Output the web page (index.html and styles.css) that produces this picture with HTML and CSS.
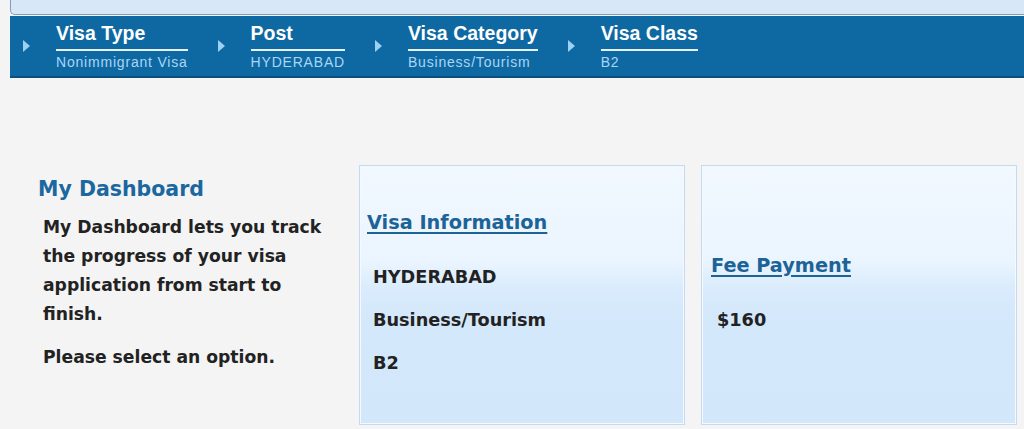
FILE: index.html
```html
<!DOCTYPE html>
<html>
<head>
<meta charset="utf-8">
<link rel="stylesheet" href="styles.css">
</head>
<body>
<div class="top-panel"></div>
<nav class="crumbs">
  <div class="step">
    <span class="arrow"></span>
    <div class="step-text">
      <div class="step-title">Visa Type</div>
      <div class="step-value">Nonimmigrant Visa</div>
    </div>
  </div>
  <div class="step">
    <span class="arrow"></span>
    <div class="step-text">
      <div class="step-title">Post</div>
      <div class="step-value">HYDERABAD</div>
    </div>
  </div>
  <div class="step">
    <span class="arrow"></span>
    <div class="step-text">
      <div class="step-title">Visa Category</div>
      <div class="step-value">Business/Tourism</div>
    </div>
  </div>
  <div class="step">
    <span class="arrow"></span>
    <div class="step-text">
      <div class="step-title">Visa Class</div>
      <div class="step-value">B2</div>
    </div>
  </div>
</nav>
<main class="main">
  <section class="intro">
    <h1 class="intro-title">My Dashboard</h1>
    <p class="intro-text">My Dashboard lets you track the progress of your visa application from start to finish.</p>
    <p class="intro-text">Please select an option.</p>
  </section>
  <section class="card card-info">
    <a class="card-link" href="#">Visa Information</a>
    <div class="card-item">HYDERABAD</div>
    <div class="card-item">Business/Tourism</div>
    <div class="card-item">B2</div>
  </section>
  <section class="card card-fee">
    <a class="card-link" href="#">Fee Payment</a>
    <div class="card-item">$160</div>
  </section>
</main>
</body>
</html>
```
FILE: styles.css
```css
html, body {
  margin: 0;
  padding: 0;
}
body {
  background: #f4f4f4;
  font-family: "DejaVu Sans", Verdana, sans-serif;
  width: 1024px;
  height: 429px;
  overflow: hidden;
}
.top-panel {
  margin-left: 10px;
  height: 14px;
  background: #d8e7f6;
  border-left: 1px solid #7d9dbf;
  border-bottom: 1px solid #7d9dbf;
  border-bottom-left-radius: 5px;
}
.crumbs {
  margin-left: 10px;
  margin-top: 1px;
  height: 60px;
  background: #0e69a3;
  border-bottom: 2px solid #0b4f7e;
  display: flex;
  align-items: flex-start;
  font-family: "Liberation Sans", Arial, sans-serif;
}
.step {
  display: flex;
  align-items: flex-start;
  margin-left: 30px;
}
.step:first-child {
  margin-left: 13px;
}
.arrow {
  width: 0;
  height: 0;
  margin-top: 24px;
  border-top: 6px solid transparent;
  border-bottom: 6px solid transparent;
  border-left: 7px solid #9dd0f2;
}
.step-text {
  margin-left: 26px;
  padding-top: 6px;
}
.step-title {
  color: #ffffff;
  font-weight: bold;
  font-size: 19.5px;
  line-height: 22px;
  padding-bottom: 5px;
  border-bottom: 2px solid #e6f1fa;
}
.step-value {
  color: #a9d6f5;
  font-size: 14px;
  letter-spacing: 0.8px;
  line-height: 18px;
  padding-top: 2px;
}
.main {
  display: flex;
  align-items: flex-start;
  margin-top: 87px;
  padding-left: 38px;
}
.intro {
  width: 321px;
  padding-top: 13px;
}
.intro-title {
  margin: 0;
  color: #1b679f;
  font-size: 20.5px;
  font-weight: bold;
  line-height: 22px;
}
.intro-text {
  width: 290px;
  margin: 13px 0 0 5px;
  color: #222222;
  font-size: 17.2px;
  font-weight: bold;
  line-height: 29px;
}
.intro-text + .intro-text {
  margin-top: 14px;
}
.card {
  box-sizing: border-box;
  height: 260px;
  padding-top: 5px;
  border: 1px solid #c3daf0;
  box-shadow: inset 0 0 0 1px #f3f9ff;
  background: linear-gradient(to bottom, #f1f8ff 0%, #ebf5ff 36%, #d9ebfc 48%, #d4e8fb 60%, #d3e7fb 100%);
  display: flex;
  flex-direction: column;
  justify-content: center;
}
.card-info {
  width: 326px;
  padding-left: 7px;
}
.card-fee {
  width: 316px;
  margin-left: 16px;
  padding-left: 9px;
}
.card-link {
  align-self: flex-start;
  color: #1c6397;
  font-size: 19.3px;
  font-weight: bold;
  line-height: 24px;
  text-decoration: underline;
  text-decoration-thickness: 2px;
  text-underline-offset: 3px;
  margin-bottom: 21px;
}
.card-item {
  margin-left: 6px;
  color: #222222;
  font-size: 17.7px;
  font-weight: bold;
  line-height: 43px;
}
```
